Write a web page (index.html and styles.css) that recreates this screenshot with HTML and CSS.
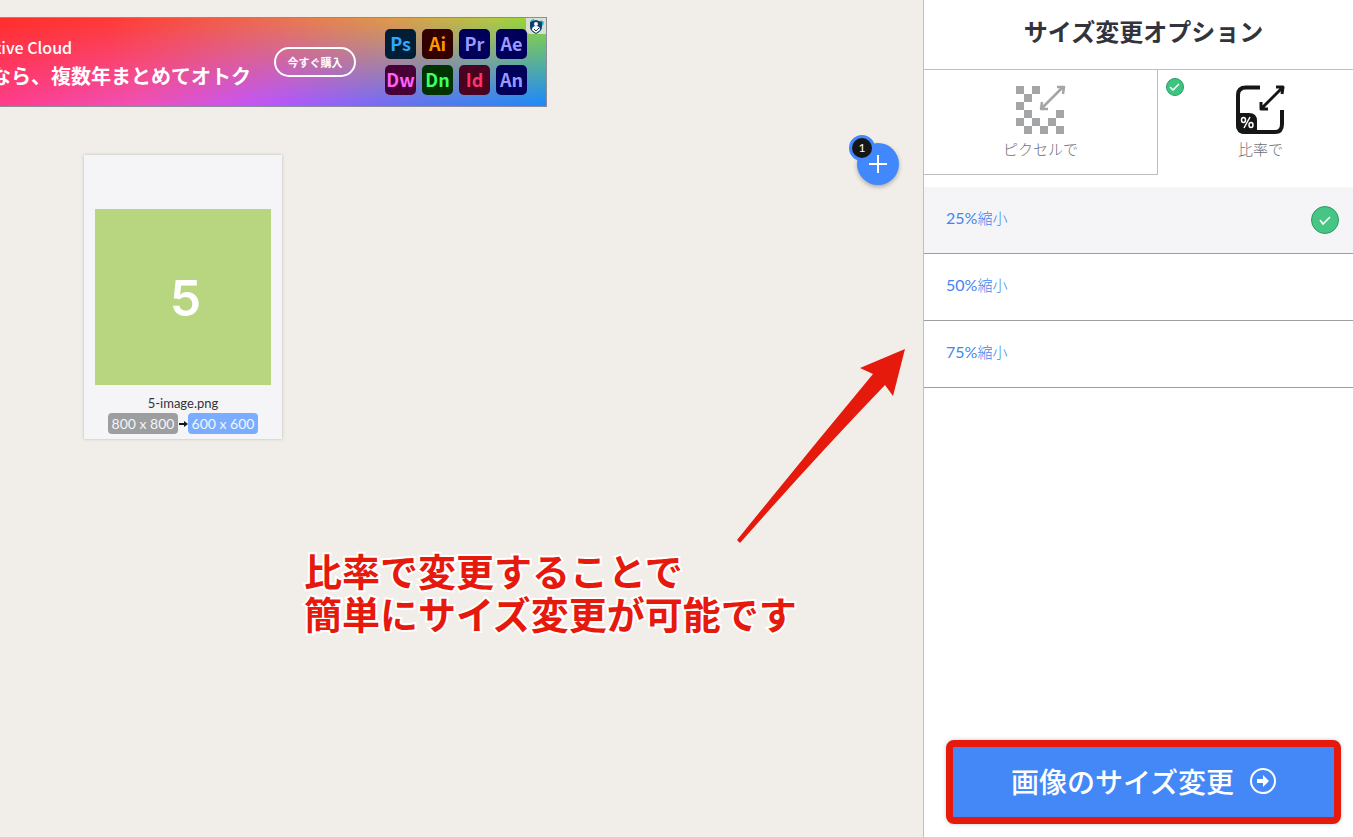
FILE: index.html
```
<!DOCTYPE html>
<html lang="ja">
<head>
  <meta charset="UTF-8">
  <meta name="viewport" content="width=device-width, initial-scale=1.0">
  <title>サイズ変更オプション</title>
  <link rel="stylesheet" href="styles.css">
</head>
<body>
  <main class="workspace">
    <div class="banner">
      <div class="banner__text">
        <p class="banner__brand">tive Cloud</p>
        <p class="banner__copy">なら、複数年まとめてオトク</p>
      </div>
      <button type="button" class="banner__buy">今すぐ購入</button>
      <ul class="apps">
        <li class="app app--ps">Ps</li>
        <li class="app app--ai">Ai</li>
        <li class="app app--pr">Pr</li>
        <li class="app app--ae">Ae</li>
        <li class="app app--dw">Dw</li>
        <li class="app app--dn">Dn</li>
        <li class="app app--id">Id</li>
        <li class="app app--an">An</li>
      </ul>
      <svg class="banner__choices" viewBox="0 0 20 16" aria-hidden="true">
        <path d="M0 0h20v16H5Q0 16 0 11z" fill="#d9dfd3"/>
        <path d="M5 2l3-1 1 3-5 2zM15 2l3 2-1 4-3-3z" fill="#25b5dc"/>
        <path d="M10 2l6 2v5q0 4-6 7-6-3-6-7V4z" fill="#123f68"/>
        <circle cx="10" cy="6" r="2" fill="#fff"/>
        <path d="M6 12q0-4 4-4t4 4l-4 3z" fill="#fff"/>
        <path d="M8 11l2 2 3-3" fill="none" stroke="#123f68"/>
      </svg>
    </div>

    <div class="files">
      <article class="file">
        <div class="file__image">5</div>
        <p class="file__name">5-image.png</p>
        <div class="file__sizes">
          <span class="size">800 x 800</span>
          <svg width="10" height="8" viewBox="0 0 10 8" aria-hidden="true"><path d="M1 3h5V1l4 3-4 3V5H1z" fill="#161616"/></svg>
          <span class="size size--new">600 x 600</span>
        </div>
      </article>
      <button type="button" class="add" aria-label="画像を追加">
        <svg width="18" height="18" viewBox="0 0 18 18" aria-hidden="true"><path d="M9 0v18M0 9h18" stroke="#fff" stroke-width="2"/></svg>
        <span class="add__count">1</span>
      </button>
    </div>

    <p class="note">比率で変更することで<br>簡単にサイズ変更が可能です</p>
    <svg class="arrow" viewBox="0 0 170 196" aria-hidden="true">
      <path d="M168 1L156 48 148 37Q76 112 3 195L0 192Q68 108 136 26L123 20z" fill="#e6190d"/>
    </svg>
  </main>

  <aside class="sidebar">
    <h1 class="sidebar__title">サイズ変更オプション</h1>
    <div class="tabs">
      <button type="button" class="tab">
        <svg width="50" height="50" viewBox="0 0 50 50" aria-hidden="true">
          <path d="M0 1h8v8H0zM16 1h8v8h-8zM8 9h8v8H8zM0 17h8v8H0zM8 25h8v8H8zM40 25h8v8h-8zM0 33h8v8H0zM16 33h8v8h-8zM32 33h8v8h-8zM8 41h8v8H8zM24 41h8v8h-8zM40 41h8v8h-8z" fill="#a3a5a6"/>
          <path d="M26 23L47 2M41 2h7l-1 7M26 17l-1 7h7" fill="none" stroke="#a3a5a6" stroke-width="2.5" stroke-linejoin="round"/>
        </svg>
        ピクセルで
      </button>
      <button type="button" class="tab tab--active">
        <svg class="tab__check" viewBox="0 0 18 18" aria-hidden="true"><circle cx="9" cy="9" r="8.5" fill="#3fc380" stroke="#249f60"/><path d="M4 9l3 3 6-6" fill="none" stroke="#fff" stroke-width="1.5"/></svg>
        <svg width="50" height="50" viewBox="0 0 50 50" aria-hidden="true">
          <path d="M24 2.5H10Q2 2.5 2 10v29q0 8 8 8h29q7 0 7-8V25" fill="none" stroke="#161616" stroke-width="4"/>
          <path d="M0 28h13q8 0 8 8v13H9Q0 49 0 40z" fill="#161616"/>
          <path d="M14 32L8 43" stroke="#fff" stroke-width="1.5"/>
          <ellipse cx="7.5" cy="35" rx="2" ry="2.5" fill="none" stroke="#fff" stroke-width="1.5"/>
          <ellipse cx="15" cy="40" rx="2" ry="2.5" fill="none" stroke="#fff" stroke-width="1.5"/>
          <path d="M25 24L47 2M40 2h7l-1 7M25 17v7h7" fill="none" stroke="#161616" stroke-width="3" stroke-linejoin="round"/>
        </svg>
        比率で
      </button>
    </div>

    <div class="options">
      <button type="button" class="option option--active">
        <span><span class="option__rate">25%</span>縮小</span>
        <svg width="28" height="28" viewBox="0 0 28 28" aria-hidden="true"><circle cx="14" cy="14" r="13.5" fill="#46c584" stroke="#2c9b62"/><path d="M9 14l3 4 7-7" fill="none" stroke="#fff" stroke-width="1.5"/></svg>
      </button>
      <button type="button" class="option">
        <span><span class="option__rate">50%</span>縮小</span>
      </button>
      <button type="button" class="option">
        <span><span class="option__rate">75%</span>縮小</span>
      </button>
    </div>

    <button type="button" class="submit">
      画像のサイズ変更
      <svg width="26" height="26" viewBox="0 0 26 26" aria-hidden="true"><circle cx="13" cy="13" r="12" fill="none" stroke="#fff" stroke-width="2"/><path d="M7 11h6V7l6 6-6 6v-4H7z" fill="#fff"/></svg>
    </button>
  </aside>
</body>
</html>
```
FILE: styles.css
```
* {
  margin: 0;
  padding: 0;
  box-sizing: border-box;
}

body {
  display: flex;
  min-height: 100vh;
  background: #f1eee9;
  color: #33333b;
  font-family: Lato, "Noto Sans CJK JP", sans-serif;
}

button {
  border: 0;
  background: none;
  color: inherit;
  font: inherit;
  cursor: pointer;
}

ul {
  list-style: none;
}

svg {
  flex-shrink: 0;
}

.workspace {
  position: relative;
  flex: 1;
  min-width: 0;
  padding-top: 17px;
}

/* Banner */

.banner {
  position: relative;
  z-index: 0;
  display: flex;
  align-items: center;
  width: 547px;
  max-width: 100%;
  height: 90px;
  padding-right: 19px;
  overflow: hidden;
  border: 1px solid #8b8b99;
  border-left: 0;
  background: linear-gradient(90deg, #ff2f2b, #ff3a35 20%, #ec7050 50%, #e09a4a 72%, #b4c840 90%, #8cdc30);
  color: #fff;
  font-family: "Noto Sans CJK JP", sans-serif;
}

/* lower half of the gradient, faded in from the top */
.banner::before {
  content: "";
  position: absolute;
  inset: 0;
  z-index: -1;
  background: linear-gradient(90deg, #ff3d8c, #f050b8 25%, #c455f5 45%, #b058ff 52%, #5575f5 78%, #1a88ff);
  -webkit-mask-image: linear-gradient(transparent, #000);
  mask-image: linear-gradient(transparent, #000);
}

.banner__text {
  flex: 1;
  margin-left: -9px;
  white-space: nowrap;
}

.banner__brand {
  padding-left: 4px;
  font-size: 16px;
  font-weight: 500;
  line-height: 28px;
}

.banner__copy {
  font-size: 20px;
  font-weight: 700;
  line-height: 30px;
}

.banner__buy {
  width: 82px;
  height: 30px;
  margin-right: 29px;
  border: 2px solid #fff;
  border-radius: 15px;
  font-size: 11px;
  font-weight: 700;
}

.apps {
  display: grid;
  grid-template-columns: repeat(4, 31px);
  gap: 6px;
}

.app {
  height: 30px;
  border-radius: 5px;
  font-size: 18px;
  font-weight: 700;
  line-height: 28px;
  text-align: center;
}

.app--ps { background: #001e36; color: #31a8ff; }
.app--ai { background: #330000; color: #ff9a00; }
.app--pr,
.app--ae,
.app--an { background: #00005b; color: #9999ff; }
.app--dw { background: #470137; color: #ff61f6; }
.app--dn { background: #003300; color: #41ff62; }
.app--id { background: #49021f; color: #ff3366; }

.banner__choices {
  position: absolute;
  top: 0;
  right: 0;
  width: 20px;
  height: 16px;
}

/* Files */

.files {
  display: flex;
  align-items: flex-start;
  justify-content: space-between;
  padding: 36px 24px 0 84px;
}

.file {
  width: 198px;
  margin-top: 12px;
  padding: 54px 11px 5px;
  background: #f5f5f8;
  box-shadow: 0 0 3px #bbb;
  text-align: center;
}

.file__image {
  height: 176px;
  padding-left: 5px;
  background: #b8d57f;
  color: #fff;
  font-family: Inter, sans-serif;
  font-size: 50px;
  font-weight: 600;
  line-height: 178px;
}

.file__name {
  margin-top: 8px;
  font-size: 13px;
  line-height: 20px;
}

.file__sizes {
  display: flex;
  align-items: center;
  justify-content: center;
}

.size {
  width: 70px;
  border-radius: 4px;
  background: #9c9ea0;
  color: #f5f5f8;
  font-size: 14px;
  line-height: 21px;
}

.size--new {
  background: #7aadff;
}

.add {
  position: relative;
  display: grid;
  place-items: center;
  width: 42px;
  height: 42px;
  border-radius: 50%;
  background: #4088fb;
  box-shadow: 0 2px 4px #aaa;
}

.add__count {
  position: absolute;
  top: -8px;
  left: -8px;
  width: 26px;
  height: 26px;
  border: 3px solid #4088fb;
  border-radius: 50%;
  background: #161616;
  color: #fff;
  font-size: 12px;
  line-height: 20px;
}

/* Notes over the workspace */

.note {
  position: absolute;
  top: 548px;
  left: 304px;
  color: #e6190d;
  font-family: "Noto Sans CJK JP", sans-serif;
  font-size: 38px;
  font-weight: 700;
  line-height: 43px;
  white-space: nowrap;
  -webkit-text-stroke: 4px #fff;
  paint-order: stroke fill;
}

.arrow {
  position: absolute;
  top: 348px;
  right: 16px;
  width: 170px;
  height: 196px;
}

/* Sidebar */

.sidebar {
  display: flex;
  flex-direction: column;
  width: 430px;
  border-left: 1px solid #bfbfbf;
  background: #fff;
}

.sidebar__title {
  padding: 14px 0 19px 10px;
  border-bottom: 1px solid #bfbfbf;
  font-size: 24px;
  font-weight: 700;
  line-height: 36px;
  text-align: center;
}

.tabs {
  display: grid;
  grid-template-columns: 234px 1fr;
}

.tab {
  position: relative;
  display: flex;
  flex-direction: column;
  align-items: center;
  height: 105px;
  padding-top: 15px;
  border-right: 1px solid #bfbfbf;
  border-bottom: 1px solid #bfbfbf;
  color: #707078;
  font-size: 15px;
  font-weight: 300;
  line-height: 28px;
}

.tab--active {
  padding-left: 10px;
  border: 0;
}

.tab__check {
  position: absolute;
  top: 8px;
  left: 8px;
  width: 18px;
  height: 18px;
}

.options {
  margin-top: 12px;
}

.option {
  display: flex;
  align-items: center;
  justify-content: space-between;
  width: 100%;
  height: 67px;
  padding: 0 14px 0 22px;
  border-bottom: 1px solid #9c9ea0;
  color: #3f86ee;
  font-size: 15px;
  font-weight: 300;
  line-height: 22px;
}

.option > span {
  padding-bottom: 4px;
}

.option__rate {
  font-size: 16px;
  font-weight: 400;
}

.option--active {
  background: #f5f5f8;
}

.submit {
  display: flex;
  align-items: center;
  justify-content: center;
  gap: 16px;
  height: 84px;
  margin: auto 12px 13px 22px;
  padding-bottom: 3px;
  border: 7px solid #e6190d;
  border-radius: 8px;
  background: #4488f8;
  box-shadow: 0 0 4px #ccc;
  color: #fff;
  font-size: 28px;
  font-weight: 500;
}
```
